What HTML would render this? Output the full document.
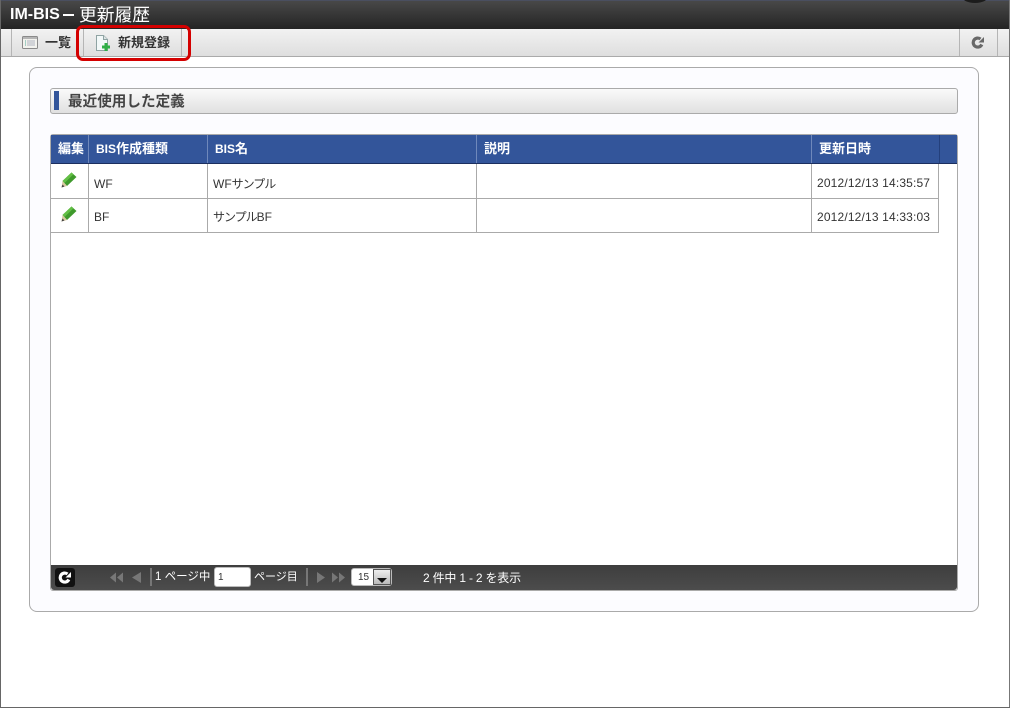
<!DOCTYPE html>
<html lang="ja">
<head>
<meta charset="utf-8">
<title>IM-BIS - 更新履歴</title>
<style>
html,body{margin:0;padding:0;background:#fff}
#p{position:relative;width:1010px;height:708px;overflow:hidden;background:#fff;font-family:"Liberation Sans","Noto Sans CJK JP",sans-serif;color:#333}
#p div,#p svg{position:absolute}
.t{white-space:nowrap;line-height:16px}
.b{font-weight:bold}
.h{font-size:13px;color:#fff;font-weight:bold}
.h span{font-size:12px}
</style>
</head>
<body>
<div id="p">
<div style="left:0;top:0;width:1px;height:708px;background:#666"></div>
<div style="left:1009px;top:0;width:1px;height:708px;background:#777"></div>
<div style="left:0;top:707px;width:1010px;height:1px;background:#666"></div>

<!-- header -->
<div style="left:1px;top:0;width:1008px;height:29px;background:linear-gradient(#484848,#242424);border-top:1px solid #4a4f60;box-sizing:border-box"></div>
<div style="left:962px;top:-10px;width:26px;height:13px;border-radius:50%;background:#1c1c1c"></div>
<div class="t b" style="left:10px;top:5px;font-size:16px;line-height:20px;color:#fff">IM-BIS</div>
<div style="left:63px;top:14px;width:11px;height:2px;background:#fff"></div>
<div class="t" style="left:79px;top:5px;font-size:17.750px;line-height:20px;color:#fff">更新履歴</div>

<!-- toolbar -->
<div style="left:1px;top:29px;width:1008px;height:27px;background:linear-gradient(#f2f2f2,#dedede)"></div>
<div style="left:1px;top:56px;width:1008px;height:1px;background:#aaa"></div>
<div style="left:11px;top:29px;width:1px;height:27px;background:#b5b5b5"></div>
<div style="left:83px;top:29px;width:1px;height:27px;background:#b5b5b5"></div>
<div style="left:181px;top:29px;width:1px;height:27px;background:#b5b5b5"></div>
<div style="left:959px;top:29px;width:1px;height:27px;background:#b5b5b5"></div>
<div style="left:997px;top:29px;width:1px;height:27px;background:#b5b5b5"></div>

<svg style="left:22px;top:36px" width="16" height="13" viewBox="0 0 16 13"><rect x=".5" y=".5" width="15" height="12" rx="1" fill="#f2f2ee" stroke="#8a8a8a"/><rect x="1" y="1" width="14" height="2" fill="#b5b5b5"/><path d="M3 5h1M3 7h1M3 9h1" stroke="#5a9" /><path d="M5 5h8M5 7h8M5 9h8" stroke="#b0b4c0"/></svg>
<div class="t b" style="left:45px;top:35px;font-size:13px;color:#333">一覧</div>

<svg style="left:95px;top:34px" width="16" height="18" viewBox="0 0 16 18"><path d="M1.500 1.500h7l4 4v11h-11z" fill="#f2f8f8" stroke="#8fa3a3"/><path d="M8.500 1.500v4h4" fill="#dfe6e6" stroke="#8fa3a3"/><path d="M9.500 9h3v2.500H15v3h-2.500V17h-3v-2.500H7v-3h2.500z" fill="#2fae45"/></svg>
<div class="t b" style="left:118px;top:35px;font-size:13px;color:#333">新規登録</div>

<svg style="left:971px;top:36px" width="14" height="13" viewBox="0 0 14 13"><path d="M10.800 8.500A4.500 4.500 0 1 1 9.500 3" fill="none" stroke="#686868" stroke-width="3.200"/><path d="M7.500 6.500h5.500V1z" fill="#686868"/></svg>

<!-- red highlight -->
<div style="left:76px;top:25px;width:115px;height:36px;box-sizing:border-box;border:3px solid #d40000;border-radius:7px"></div>

<!-- panel -->
<div style="left:29px;top:67px;width:950px;height:545px;box-sizing:border-box;background:#fcfcff;border:1px solid #aaa;border-radius:8px"></div>

<!-- section title -->
<div style="left:50px;top:88px;width:908px;height:26px;box-sizing:border-box;background:linear-gradient(#fafafa,#e0e0e0);border:1px solid #aaa;border-radius:3px"></div>
<div style="left:54px;top:91px;width:5px;height:19px;background:#33559a"></div>
<div class="t b" style="left:68px;top:94px;font-size:14.600px;color:#444">最近使用した定義</div>

<!-- table frame -->
<div style="left:50px;top:134px;width:908px;height:457px;box-sizing:border-box;background:#fff;border:1px solid #aaa;border-radius:3px"></div>
<div style="left:51px;top:135px;width:906px;height:28px;background:#33559a"></div>
<div style="left:51px;top:163px;width:906px;height:1px;background:#1c2f5f"></div>
<div style="left:88px;top:135px;width:1px;height:28px;background:#6f88bb"></div>
<div style="left:207px;top:135px;width:1px;height:28px;background:#6f88bb"></div>
<div style="left:476px;top:135px;width:1px;height:28px;background:#6f88bb"></div>
<div style="left:811px;top:135px;width:1px;height:28px;background:#6f88bb"></div>
<div style="left:939px;top:135px;width:1px;height:28px;background:#24407c"></div>

<div class="t h" style="left:58px;top:141px">編集</div>
<div class="t h" style="left:96px;top:141px"><span>BIS</span>作成種類</div>
<div class="t h" style="left:215px;top:141px"><span>BIS</span>名</div>
<div class="t h" style="left:484px;top:141px">説明</div>
<div class="t h" style="left:819px;top:141px">更新日時</div>

<!-- rows -->
<div style="left:51px;top:198px;width:888px;height:1px;background:#aaa"></div>
<div style="left:51px;top:232px;width:888px;height:1px;background:#aaa"></div>
<div style="left:88px;top:164px;width:1px;height:69px;background:#aaa"></div>
<div style="left:207px;top:164px;width:1px;height:69px;background:#aaa"></div>
<div style="left:476px;top:164px;width:1px;height:69px;background:#aaa"></div>
<div style="left:811px;top:164px;width:1px;height:69px;background:#aaa"></div>
<div style="left:938px;top:164px;width:1px;height:69px;background:#aaa"></div>

<svg style="left:61px;top:172px" width="16" height="16" viewBox="0 0 16 16"><path d="M10.500 .5L15.500 5 6 14 1.500 9z" fill="#3f9a2c"/><path d="M10.500 .5l2 1.800L3.500 11 1.500 9z" fill="#63bf45"/><path d="M1.500 9L6 14 .5 15.500z" fill="#d8c8a0"/><path d="M.5 15.500l1-3 2 2z" fill="#444"/></svg>
<svg style="left:61px;top:206px" width="16" height="16" viewBox="0 0 16 16"><path d="M10.500 .5L15.500 5 6 14 1.500 9z" fill="#3f9a2c"/><path d="M10.500 .5l2 1.800L3.500 11 1.500 9z" fill="#63bf45"/><path d="M1.500 9L6 14 .5 15.500z" fill="#d8c8a0"/><path d="M.5 15.500l1-3 2 2z" fill="#444"/></svg>

<div class="t" style="left:94px;top:176px;font-size:12px">WF</div>
<div class="t" style="left:213px;top:176px;font-size:12px">WF<span style="letter-spacing:-1px">サンプル</span></div>
<div class="t" style="left:817px;top:175px;font-size:12px;letter-spacing:.16px">2012/12/13 14:35:57</div>
<div class="t" style="left:94px;top:209px;font-size:12px">BF</div>
<div class="t" style="left:213px;top:209px;font-size:12px"><span style="letter-spacing:-1px">サンプル</span>BF</div>
<div class="t" style="left:817px;top:209px;font-size:12px;letter-spacing:.16px">2012/12/13 14:33:03</div>

<!-- pager -->
<div style="left:51px;top:565px;width:906px;height:25px;background:linear-gradient(#3e3e3e,#4c4c4c);border-radius:0 0 3px 3px"></div>
<div style="left:55px;top:568px;width:20px;height:19px;background:#111;border-radius:3px"></div>
<svg style="left:58px;top:571px" width="14" height="13" viewBox="0 0 14 13"><path d="M10.800 8.500A4.500 4.500 0 1 1 9.500 3" fill="none" stroke="#fff" stroke-width="3.200"/><path d="M7.500 6.500h5.500V1z" fill="#fff"/></svg>
<svg style="left:109px;top:571px" width="34" height="13" viewBox="0 0 34 13"><path d="M7 1.500L1 6.500l6 5zM14 1.500L8 6.500l6 5zM32 1v11l-9-5.500z" fill="#777"/></svg>
<div style="left:150px;top:568px;width:2px;height:18px;background:#777"></div>
<div class="t" style="left:155px;top:569px;font-size:11.500px;color:#fff">1 ページ中</div>
<div style="left:214px;top:567px;width:37px;height:20px;box-sizing:border-box;background:#fff;border:1px solid #bbb;border-radius:3px"></div>
<div class="t" style="left:218px;top:571px;font-size:10px;line-height:14px;color:#333">1</div>
<div class="t" style="left:254px;top:569px;font-size:11px;color:#fff">ページ目</div>
<div style="left:306px;top:568px;width:2px;height:18px;background:#777"></div>
<svg style="left:316px;top:571px" width="30" height="13" viewBox="0 0 30 13"><path d="M1 1v11l8-5.500zM16 1.500l6 5-6 5zM23 1.500l6 5-6 5z" fill="#777"/></svg>
<div style="left:351px;top:568px;width:41px;height:18px;box-sizing:border-box;background:#fff;border:1px solid #bbb;border-radius:3px"></div>
<div class="t" style="left:358px;top:571px;font-size:10px;line-height:14px;color:#333">15</div>
<div style="left:373px;top:569px;width:18px;height:16px;box-sizing:border-box;background:linear-gradient(#eee,#bbb);border:1px solid #555"></div>
<svg style="left:377px;top:578px" width="10" height="5" viewBox="0 0 10 5"><path d="M0 0h10L5 5z" fill="#111"/></svg>
<div class="t" style="left:423px;top:570px;font-size:12px;letter-spacing:-.2px;color:#fff">2 件中 1 - 2 を表示</div>
</div>
</body>
</html>
